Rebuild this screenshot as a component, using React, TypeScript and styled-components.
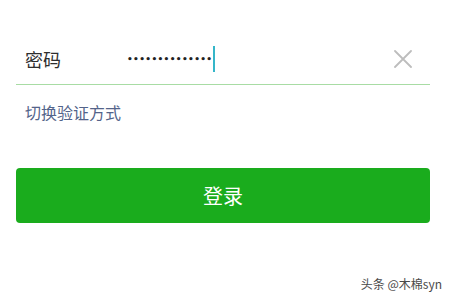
import React from "react";
import styled, { createGlobalStyle } from "styled-components";

const Global = createGlobalStyle`
  html, body { margin: 0; padding: 0; background: #fff; }
  body { font-family: "Noto Sans CJK SC", "Noto Sans", sans-serif; width: 450px; height: 300px; overflow: hidden; position: relative; }
`;

const Page = styled.div`
  position: relative;
  width: 450px;
  height: 300px;
  padding: 33px 20px 0 16px;
  box-sizing: border-box;
`;

const Row = styled.div`
  display: flex;
  align-items: center;
  height: 52px;
  padding: 0 18px 0 9px;
  border-bottom: 1px solid #a8dca4;
  box-sizing: border-box;
`;

const Label = styled.span`
  width: 102px;
  font-size: 18px;
  line-height: 22px;
  color: #2e2e2e;
`;

const Field = styled.div`
  flex: 1;
  display: flex;
  align-items: center;
  height: 26px;
`;

const Dots = styled.span`
  font-family: "DejaVu Sans", sans-serif;
  font-size: 9px;
  font-weight: bold;
  letter-spacing: 0.35px;
  color: #222;
  line-height: 26px;
  margin-top: 1px;
`;

const Caret = styled.span`
  display: inline-block;
  width: 2px;
  height: 26px;
  background: #35b6c9;
  margin-left: 1px;
`;

const Clear = styled.svg`
  width: 18px;
  height: 18px;
  display: block;
`;

const Link = styled.div`
  margin-top: 17px;
  padding-left: 9px;
  font-size: 16px;
  line-height: 20px;
  color: #53648a;
`;

const Button = styled.div`
  margin-top: 46px;
  height: 55px;
  border-radius: 4px;
  background: #1aac1d;
  color: #fff;
  font-size: 20px;
  display: flex;
  align-items: center;
  justify-content: center;
`;

const Watermark = styled.div`
  position: absolute;
  right: 8px;
  bottom: 9px;
  font-size: 12px;
  line-height: 14px;
  color: #4a4a4a;
`;

export default function App() {
  return (
    <>
      <Global />
      <Page>
        <Row>
          <Label>密码</Label>
          <Field>
            <Dots>{"••••••••••••••"}</Dots>
            <Caret />
          </Field>
          <Clear viewBox="0 0 18 18">
            <path d="M1 1 L17 17 M17 1 L1 17" stroke="#bdbdbd" strokeWidth="1.8" strokeLinecap="round" />
          </Clear>
        </Row>
        <Link>切换验证方式</Link>
        <Button>登录</Button>
        <Watermark>头条 @木棉syn</Watermark>
      </Page>
    </>
  );
}
